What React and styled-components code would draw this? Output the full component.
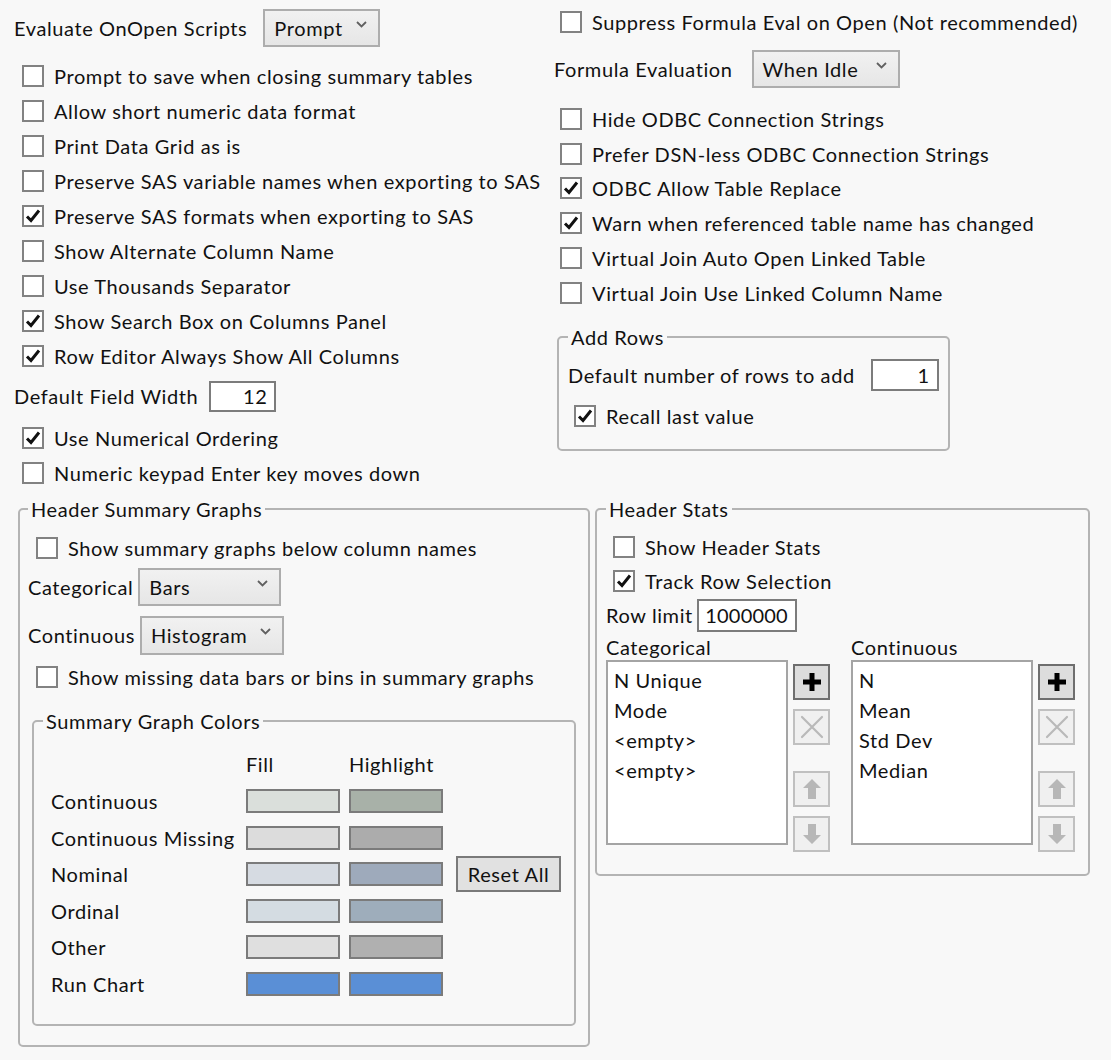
import React from 'react';
import styled, { createGlobalStyle } from 'styled-components';

const GlobalStyle = createGlobalStyle`
  html, body {
    margin: 0;
    background: #f8f8f8;
  }

  body {
    font-family: Lato, "Open Sans", sans-serif;
    font-size: 20px;
    letter-spacing: 0.6px;
    color: #111;
  }
`;

const Page = styled.div`
  width: 1111px;
  height: 1060px;
  box-sizing: border-box;
  padding-left: 14px;
  overflow: hidden;
`;

const Top = styled.div`
  display: grid;
  grid-template-columns: 540px 1fr;
  align-items: start;
`;

const Column = styled.div`
  display: flex;
  flex-direction: column;
  padding-top: ${p => p.$top}px;
`;

const Row = styled.div`
  display: flex;
  align-items: center;
  gap: ${p => p.$gap ?? 0}px;
  height: ${p => p.$h ?? 35}px;
  margin-top: ${p => p.$mt ?? 0}px;
  white-space: nowrap;
`;

const Label = styled.span`
  line-height: 26px;
`;

const Box = styled.span`
  width: 22px;
  height: 22px;
  box-sizing: border-box;
  border: 2px solid #828282;
  background: #fff;
  display: flex;
  align-items: center;
  justify-content: center;
  flex-shrink: 0;
`;

const CheckRow = styled(Row)`
  gap: 10px;
  padding-left: ${p => p.$indent ?? 8}px;
`;

const Check = ({ label, checked, indent, h, mt }) => (
  <CheckRow $indent={indent} $h={h} $mt={mt}>
    <Box>
      {checked && (
        <svg width="16" height="16" viewBox="0 0 16 16">
          <path d="M2 8.5 L6 12.5 L14 2.5" fill="none" stroke="#111" strokeWidth="3" />
        </svg>
      )}
    </Box>
    <Label>{label}</Label>
  </CheckRow>
);

const SelectBox = styled.div`
  width: ${p => p.$w}px;
  height: ${p => p.$h ?? 38}px;
  box-sizing: border-box;
  border: 2px solid #adadad;
  background: linear-gradient(#f1f1f1, #e6e6e6);
  display: flex;
  justify-content: space-between;
  align-items: center;
  padding: 0 11px 0 9px;
  flex-shrink: 0;

  svg {
    align-self: flex-start;
    margin-top: 10px;
  }
`;

const Select = ({ value, w, h }) => (
  <SelectBox $w={w} $h={h}>
    <Label>{value}</Label>
    <svg width="11" height="7" viewBox="0 0 11 7">
      <path d="M1 1 L5.5 5.5 L10 1" fill="none" stroke="#606060" strokeWidth="1.8" />
    </svg>
  </SelectBox>
);

const NumberInput = styled.div`
  width: ${p => p.$w}px;
  height: ${p => p.$h}px;
  box-sizing: border-box;
  border: 2px solid #7c7c7c;
  background: #fff;
  display: flex;
  align-items: center;
  justify-content: flex-end;
  padding-right: 7px;
  flex-shrink: 0;
  letter-spacing: ${p => p.$ls ?? 0.6}px;
`;

const Fieldset = styled.fieldset`
  margin: ${p => p.$margin ?? '0'};
  padding: ${p => p.$pad};
  border: 2px solid #b4b4b4;
  border-radius: 5px;
  min-width: 0;
  box-sizing: border-box;
  width: ${p => (p.$w ? `${p.$w}px` : 'auto')};
`;

const Legend = styled.legend`
  padding: 0 3px;
  margin-left: ${p => p.$ml ?? 0}px;
  line-height: 26px;
  font-size: 20px;
`;

const Bottom = styled.div`
  display: flex;
  align-items: flex-start;
  gap: 5px;
  margin-top: 5px;
  padding-left: 4px;
`;

const ColorGrid = styled.div`
  display: grid;
  grid-template-columns: 186px 94px 94px auto;
  grid-auto-rows: 36.6px;
  column-gap: 9px;
  align-items: center;
  white-space: nowrap;
`;

const Swatch = styled.div`
  width: 94px;
  height: 24px;
  box-sizing: border-box;
  border: 2px solid #7b7b7b;
  background: ${p => p.$color};
`;

const PushButton = styled.div`
  grid-column: 4;
  grid-row: 4;
  margin-left: 4px;
  width: 105px;
  height: 36px;
  box-sizing: border-box;
  border: 2px solid #7a7a7a;
  background: #e1e1e1;
  display: flex;
  align-items: center;
  justify-content: center;
`;

const ListsRow = styled.div`
  display: flex;
  gap: 21px;
  margin-top: 2px;
`;

const ListGroup = styled.div`
  display: grid;
  grid-template-columns: 182px 37px;
  grid-template-rows: 26px auto;
  column-gap: 5px;
  align-items: start;
`;

const GroupTitle = styled.span`
  grid-column: 1 / 3;
  line-height: 26px;
`;

const ListBox = styled.div`
  height: 185px;
  box-sizing: border-box;
  border: 2px solid #a4a4a4;
  background: #fff;
  padding: 3px 6px;
`;

const ListItem = styled.div`
  line-height: 30px;
  white-space: nowrap;
`;

const ButtonColumn = styled.div`
  display: flex;
  flex-direction: column;
  padding-top: 4px;
`;

const IconButton = styled.div`
  width: 37px;
  height: 36px;
  flex-shrink: 0;
  box-sizing: border-box;
  border: 2px solid ${p => (p.$disabled ? '#c0c0c0' : '#6e6e6e')};
  background: ${p => (p.$disabled ? '#f0f0f0' : '#dddddd')};
  display: flex;
  align-items: center;
  justify-content: center;
  margin-top: ${p => p.$mt ?? 0}px;
`;

const PlusIcon = () => (
  <svg width="22" height="22" viewBox="0 0 22 22">
    <path d="M11 2 V20 M2 11 H20" stroke="#000" strokeWidth="5" />
  </svg>
);

const CrossIcon = () => (
  <svg width="26" height="26" viewBox="0 0 26 26">
    <path d="M3 3 L23 23 M23 3 L3 23" stroke="#b9b9b9" strokeWidth="2.2" strokeLinecap="round" />
  </svg>
);

const ArrowIcon = ({ down }) => (
  <svg width="20" height="22" viewBox="0 0 20 22" style={down ? { transform: 'rotate(180deg)' } : undefined}>
    <path d="M10 1 L19 10 H14 V21 H6 V10 H1 Z" fill="#b7b7b7" />
  </svg>
);

const StatsList = ({ title, items }) => (
  <ListGroup>
    <GroupTitle>{title}</GroupTitle>
    <ListBox>
      {items.map((item, i) => (
        <ListItem key={i}>{item}</ListItem>
      ))}
    </ListBox>
    <ButtonColumn>
      <IconButton><PlusIcon /></IconButton>
      <IconButton $disabled $mt={9}><CrossIcon /></IconButton>
      <IconButton $disabled $mt={26}><ArrowIcon /></IconButton>
      <IconButton $disabled $mt={9}><ArrowIcon down /></IconButton>
    </ButtonColumn>
  </ListGroup>
);

const leftChecks = [
  ['Prompt to save when closing summary tables', false],
  ['Allow short numeric data format', false],
  ['Print Data Grid as is', false],
  ['Preserve SAS variable names when exporting to SAS', false],
  ['Preserve SAS formats when exporting to SAS', true],
  ['Show Alternate Column Name', false],
  ['Use Thousands Separator', false],
  ['Show Search Box on Columns Panel', true],
  ['Row Editor Always Show All Columns', true],
];

const rightChecks = [
  ['Hide ODBC Connection Strings', false],
  ['Prefer DSN-less ODBC Connection Strings', false],
  ['ODBC Allow Table Replace', true],
  ['Warn when referenced table name has changed', true],
  ['Virtual Join Auto Open Linked Table', false],
  ['Virtual Join Use Linked Column Name', false],
];

const colorRows = [
  ['Continuous', '#dadfdb', '#a8b1a8'],
  ['Continuous Missing', '#dcdcdc', '#acacac'],
  ['Nominal', '#d6dbe2', '#9eaabb'],
  ['Ordinal', '#d4dce2', '#9eadbb'],
  ['Other', '#dfdfdf', '#b0b0b0'],
  ['Run Chart', '#5a8fd6', '#5a8fd6'],
];

export default function App() {
  return (
    <Page>
      <GlobalStyle />
      <Top>
        <Column $top={9}>
          <Row $h={38} $gap={16}>
            <Label>Evaluate OnOpen Scripts</Label>
            <Select value="Prompt" w={117} />
          </Row>
          <Column $top={11.5}>
            {leftChecks.map(([label, checked]) => (
              <Check key={label} label={label} checked={checked} />
            ))}
          </Column>
          <Row $h={36} $mt={4.5} $gap={11}>
            <Label>Default Field Width</Label>
            <NumberInput $w={67} $h={31}>12</NumberInput>
          </Row>
          <Check label="Use Numerical Ordering" checked mt={6.5} />
          <Check label="Numeric keypad Enter key moves down" />
        </Column>

        <Column $top={4}>
          <Check label="Suppress Formula Eval on Open (Not recommended)" indent={6} />
          <Row $h={38} $mt={11} $gap={19}>
            <Label>Formula Evaluation</Label>
            <Select value="When Idle" w={148} />
          </Row>
          <Column $top={13.5}>
            {rightChecks.map(([label, checked]) => (
              <Check key={label} label={label} checked={checked} indent={6} h={34.8} />
            ))}
          </Column>
          <Fieldset $w={393} $margin="14px 0 0 3px" $pad="8px 9px 16px 9px">
            <Legend>Add Rows</Legend>
            <Row $h={34} $gap={16}>
              <Label>Default number of rows to add</Label>
              <NumberInput $w={68} $h={32}>1</NumberInput>
            </Row>
            <Check label="Recall last value" checked indent={6} h={34} mt={7} />
          </Fieldset>
        </Column>
      </Top>

      <Bottom>
        <Fieldset $w={572} $pad="8.5px 12px 19px 8px">
          <Legend>Header Summary Graphs</Legend>
          <Check label="Show summary graphs below column names" />
          <Row $h={38} $mt={2.5} $gap={5}>
            <Label>Categorical</Label>
            <Select value="Bars" w={143} />
          </Row>
          <Row $h={39} $mt={10} $gap={5}>
            <Label>Continuous</Label>
            <Select value="Histogram" w={144} h={39} />
          </Row>
          <Check label="Show missing data bars or bins in summary graphs" mt={4.5} />
          <Fieldset $margin="13.5px 0 0 4px" $pad="12.7px 12px 22px 17px">
            <Legend $ml={-8}>Summary Graph Colors</Legend>
            <ColorGrid>
              <span />
              <Label>Fill</Label>
              <Label>Highlight</Label>
              {colorRows.map(([name, fill, highlight]) => (
                <React.Fragment key={name}>
                  <Label style={{ gridColumn: 1 }}>{name}</Label>
                  <Swatch $color={fill} />
                  <Swatch $color={highlight} />
                </React.Fragment>
              ))}
              <PushButton>Reset All</PushButton>
            </ColorGrid>
          </Fieldset>
        </Fieldset>

        <Fieldset $w={495} $pad="8.5px 9px 22px 9px">
          <Legend>Header Stats</Legend>
          <Check label="Show Header Stats" indent={7} h={34} />
          <Check label="Track Row Selection" checked indent={7} h={34} />
          <Row $h={34} $gap={4}>
            <Label>Row limit</Label>
            <NumberInput $w={100} $h={33} $ls={0.2}>1000000</NumberInput>
          </Row>
          <ListsRow>
            <StatsList title="Categorical" items={['N Unique', 'Mode', '<empty>', '<empty>']} />
            <StatsList title="Continuous" items={['N', 'Mean', 'Std Dev', 'Median']} />
          </ListsRow>
        </Fieldset>
      </Bottom>
    </Page>
  );
}
